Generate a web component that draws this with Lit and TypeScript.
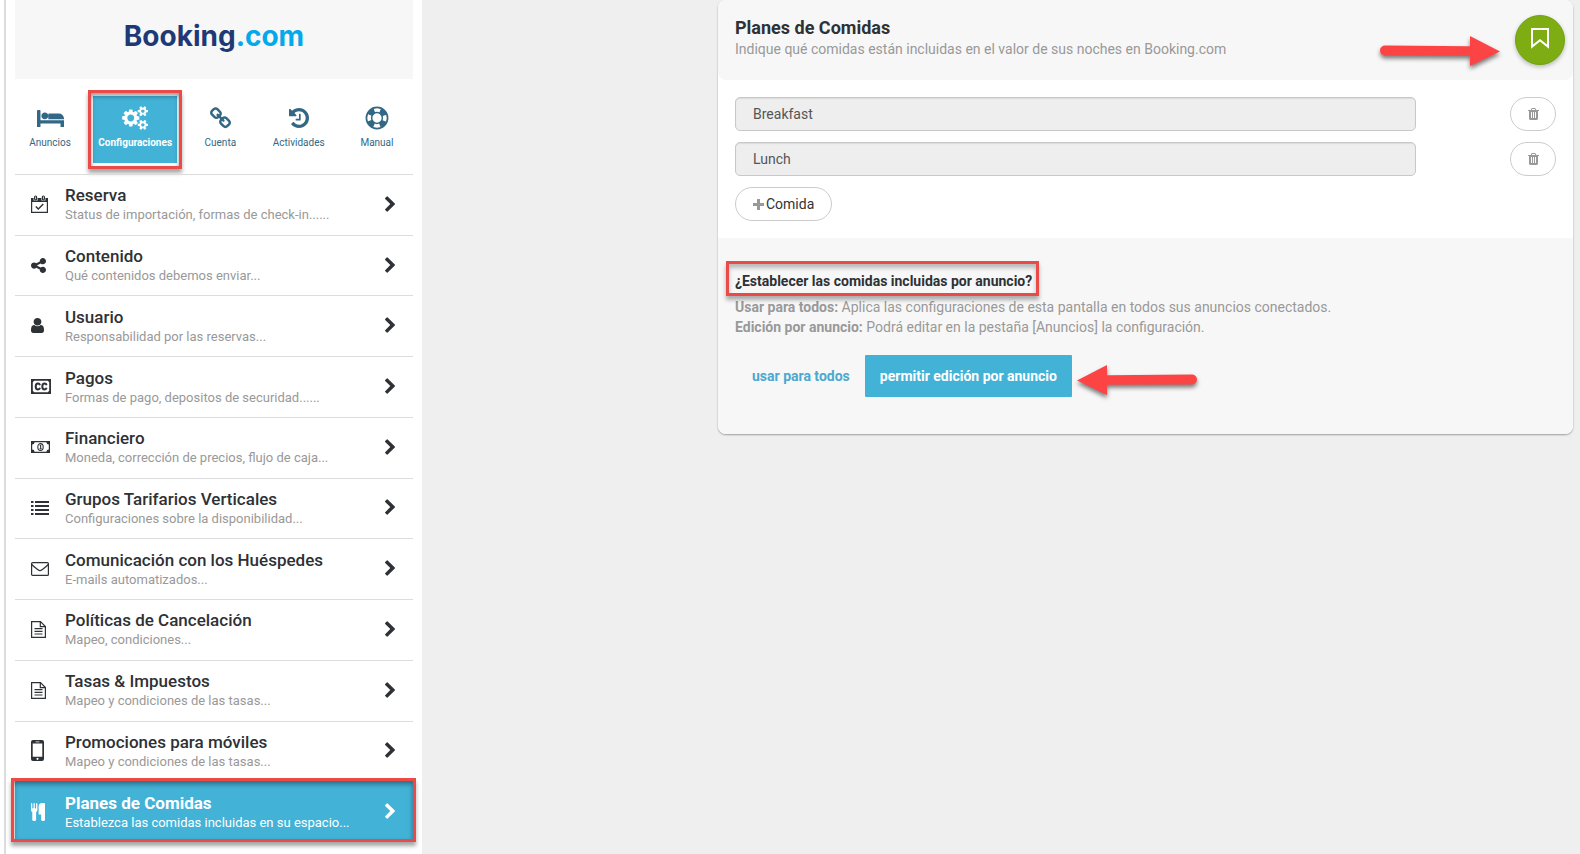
import { LitElement, html, css, svg, nothing } from "lit";
import { customElement, property, state } from "lit/decorators.js";
import { classMap } from "lit/directives/class-map.js";

type Glyph = { box: string; w: number; h: number; body: unknown };

const glyphs: Record<string, Glyph> = {
  bed: {
    box: "0 256 1984 1280", w: 27, h: 17,
    body: svg`<path d="M256 1024h1728v512h-256v-256h-1472v256h-256v-1216q0-26 19-45t45-19h128q26 0 45 19t19 45v704zm576-320q0-106-75-181t-181-75-181 75-75 181 75 181 181 75 181-75 75-181zm1152 256v-64q0-159-112.5-271.5t-271.5-112.5h-704q-26 0-45 19t-19 45v384h1152z"/>`,
  },
  cogs: {
    box: "0 0 1856 1792", w: 25, h: 24,
    body: svg`<path d="M832 896q0-106-75-181t-181-75-181 75-75 181 75 181 181 75 181-75 75-181zm768 512q0-52-38-90t-90-38-90 38-38 90q0 53 37.5 90.5t90.5 37.5 90.5-37.5 37.5-90.5zm0-1024q0-52-38-90t-90-38-90 38-38 90q0 53 37.5 90.5t90.5 37.5 90.5-37.5 37.5-90.5zm-384 421v185q0 10-7 19.5t-16 10.5l-155 24q-11 35-32 76 34 48 90 115 7 11 7 20 0 12-7 19-23 30-82.5 89.5t-78.5 59.5q-11 0-21-7l-115-90q-37 19-77 31-11 108-23 155-7 24-30 24h-186q-11 0-20-7.5t-10-17.5l-23-153q-34-10-75-31l-118 89q-7 7-20 7-11 0-21-8-144-133-144-160 0-9 7-19 10-14 41-53t47-61q-23-44-35-82l-152-24q-10-1-17-9.5t-7-19.5v-185q0-10 7-19.5t16-10.5l155-24q11-35 32-76-34-48-90-115-7-11-7-20 0-12 7-20 22-30 82-89t79-59q11 0 21 7l115 90q34-18 77-32 11-108 23-154 7-24 30-24h186q11 0 20 7.5t10 17.5l23 153q34 10 75 31l118-89q8-7 20-7 11 0 21 8 144 133 144 160 0 8-7 19-12 16-42 54t-45 60q23 48 34 82l152 23q10 2 17 10.5t7 19.5zm640 533v140q0 16-149 31-12 27-30 52 51 113 51 138 0 4-4 7-122 71-124 71-8 0-46-47t-52-68q-20 2-30 2t-30-2q-14 21-52 68t-46 47q-2 0-124-71-4-3-4-7 0-25 51-138-18-25-30-52-149-15-149-31v-140q0-16 149-31 13-29 30-52-51-113-51-138 0-4 4-7 4-2 35-20t59-34 30-16q8 0 46 46.5t52 67.5q20-2 30-2t30 2q51-71 92-112l6-2q4 0 124 70 4 3 4 7 0 25-51 138 17 23 30 52 149 15 149 31zm0-1024v140q0 16-149 31-12 27-30 52 51 113 51 138 0 4-4 7-122 71-124 71-8 0-46-47t-52-68q-20 2-30 2t-30-2q-14 21-52 68t-46 47q-2 0-124-71-4-3-4-7 0-25 51-138-18-25-30-52-149-15-149-31v-140q0-16 149-31 13-29 30-52-51-113-51-138 0-4 4-7 4-2 35-20t59-34 30-16q8 0 46 46.5t52 67.5q20-2 30-2t30 2q51-71 92-112l6-2q4 0 124 70 4 3 4 7 0 25-51 138 17 23 30 52 149 15 149 31z"/>`,
  },
  link: {
    box: "80 80 1632 1632", w: 21, h: 21,
    body: svg`<path d="M1520 1216q0-40-28-68l-208-208q-28-28-68-28-42 0-72 32 3 3 19 18.5t21.5 21.5 15 19 13 25.5 3.5 27.5q0 40-28 68t-68 28q-15 0-27.5-3.5t-25.5-13-19-15-21.5-21.5-18.5-19q-33 31-33 73 0 40 28 68l206 207q27 27 68 27 40 0 68-26l147-146q28-28 28-67zm-703-705q0-40-28-68l-206-207q-28-28-68-28-39 0-68 27l-147 146q-28 28-28 67 0 40 28 68l208 208q27 27 68 27 42 0 72-31-3-3-19-18.5t-21.5-21.5-15-19-13-25.5-3.5-27.5q0-40 28-68t68-28q15 0 27.5 3.5t25.5 13 19 15 21.5 21.5 18.5 19q33-31 33-73zm895 705q0 120-85 203l-147 146q-83 83-203 83-121 0-204-85l-206-207q-83-83-83-203 0-123 88-209l-88-88q-86 88-208 88-120 0-204-84l-208-208q-84-84-84-204t85-203l147-146q83-83 203-83 121 0 204 85l206 207q83 83 83 203 0 123-88 209l88 88q86-88 208-88 120 0 204 84l208 208q84 84 84 204z"/>`,
  },
  history: {
    box: "128 128 1536 1536", w: 20, h: 20,
    body: svg`<path d="M1664 896q0 156-61 298t-164 245-245 164-298 61q-172 0-327-72.5t-264-204.5q-7-10-6.5-22.5t8.5-20.5l137-138q10-9 25-9 16 2 23 12 73 95 179 147t225 52q104 0 198.5-40.5t163.5-109.5 109.5-163.5 40.5-198.5-40.5-198.5-109.5-163.5-163.5-109.5-198.5-40.5q-98 0-188 35.5t-160 101.5l137 138q31 30 14 69-17 40-59 40h-448q-26 0-45-19t-19-45v-448q0-42 40-59 39-17 69 14l130 129q107-101 244.5-156.5t284.5-55.5q156 0 298 61t245 164 164 245 61 298zm-640-288v448q0 14-9 23t-23 9h-320q-14 0-23-9t-9-23v-64q0-14 9-23t23-9h224v-352q0-14 9-23t23-9h64q14 0 23 9t9 23z"/>`,
  },
  ring: {
    box: "0 0 24 24", w: 24, h: 24,
    body: svg`<g fill="none" stroke="currentColor"><circle cx="12" cy="12" r="10.6" stroke-width="1.7"/><circle cx="12" cy="12" r="5.4" stroke-width="1.5"/><circle cx="12" cy="12" r="8" stroke-width="5.6" stroke-dasharray="6.6 5.966" stroke-dashoffset="-2.98"/></g>`,
  },
  calendar: {
    box: "0 0 17 18", w: 17, h: 18,
    body: svg`<path fill-rule="evenodd" d="M0 3h17v15H0zM1.2 7v9.8h14.6V7z"/><path fill="#fff" d="M2.6 1.6h4v4h-4zM10.4 1.6h4v4h-4z"/><path d="M3 2a1.6 1.6 0 0 1 3.2 0v1.8a1.6 1.6 0 0 1-3.2 0zM10.8 2a1.6 1.6 0 0 1 3.2 0v1.8a1.6 1.6 0 0 1-3.2 0z"/><path fill="#fff" d="M4.3 1.6h.7v2.6h-.7zM12.1 1.6h.7v2.6h-.7z"/><path fill="none" stroke="currentColor" stroke-width="1.4" d="M4.8 11.6l2.5 2.5 5-5"/>`,
  },
  share: {
    box: "128 128 1536 1536", w: 15, h: 15,
    body: svg`<path d="M1344 1024q133 0 226.5 93.5t93.5 226.5-93.5 226.5-226.5 93.5-226.5-93.5-93.5-226.5q0-12 2-34l-360-180q-92 86-218 86-133 0-226.5-93.5t-93.5-226.5 93.5-226.5 226.5-93.5q126 0 218 86l360-180q-2-22-2-34 0-133 93.5-226.5t226.5-93.5 226.5 93.5 93.5 226.5-93.5 226.5-226.5 93.5q-126 0-218-86l-360 180q2 22 2 34t-2 34l360 180q92-86 218-86z"/>`,
  },
  user: {
    box: "256 128 1280 1536", w: 13, h: 15,
    body: svg`<path d="M1536 1399q0 109-62.5 187t-150.5 78h-854q-88 0-150.5-78t-62.5-187q0-85 8.5-160.5t31.5-152 58.5-131 94-89 134.5-34.5q131 128 313 128t313-128q76 0 134.5 34.5t94 89 58.5 131 31.5 152 8.5 160.5zm-256-887q0 159-112.5 271.5t-271.5 112.5-271.5-112.5-112.5-271.5 112.5-271.5 271.5-112.5 271.5 112.5 112.5 271.5z"/>`,
  },
  cc: {
    box: "0 0 20 15", w: 20, h: 15,
    body: svg`<path fill-rule="evenodd" d="M0 0h20v15H0zM1.8 3.2v8.6l1.4 1.4h13.6l1.4-1.4V3.2l-1.4-1.4H3.2z"/><g fill="none" stroke="currentColor" stroke-width="2"><path d="M9 6.3C8.700 5 7.900 4.600 7 4.600 5.400 4.600 4.700 5.800 4.700 7.500S5.400 10.400 7 10.400C7.900 10.400 8.700 10 9 8.700"/><path d="M15.600 6.300C15.300 5 14.500 4.600 13.600 4.600 12 4.600 11.300 5.800 11.300 7.500S12 10.400 13.600 10.400C14.500 10.400 15.300 10 15.600 8.700"/></g>`,
  },
  money: {
    box: "0 0 19 12", w: 19, h: 12,
    body: svg`<path fill-rule="evenodd" d="M0 0h19v12H0zM3.600 1.200A2.500 2.500 0 0 1 1.200 3.500v5a2.500 2.500 0 0 1 2.400 2.300h11.800a2.500 2.500 0 0 1 2.400-2.300v-5a2.500 2.500 0 0 1-2.400-2.300z"/><ellipse cx="9.500" cy="6" rx="2.700" ry="3.400" fill="none" stroke="currentColor" stroke-width="1.100"/><path d="M8.500 4.500l1-.8h.7v3.700h.7v.8H8.400v-.8h.7V4.900z"/>`,
  },
  list: {
    box: "0 0 18 14", w: 18, h: 14,
    body: svg`<path d="M0 0h2.500v2H0zM4 0h14v2H4zM0 4h2.500v2H0zM4 4h14v2H4zM0 8h2.500v2H0zM4 8h14v2H4zM0 12h2.500v2H0zM4 12h14v2H4z"/>`,
  },
  mail: {
    box: "0 0 18 14", w: 18, h: 14,
    body: svg`<g fill="none" stroke="currentColor" stroke-width="1.200"><rect x=".6" y=".6" width="16.800" height="12.800" rx="1"/><path d="M.8 2.500c2 2.200 4 3.600 6.200 5.300q2 1.500 4 0c2.200-1.700 4.200-3.100 6.200-5.300"/></g>`,
  },
  file: {
    box: "0 0 15 17", w: 15, h: 17,
    body: svg`<g fill="none" stroke="currentColor" stroke-width="1.200"><path d="M.6.6h8.900l4.900 4.900v10.900H.6zM9.300.6v5h5"/><path d="M3.500 7.600h8M3.500 10.300h8M3.500 13h8"/></g>`,
  },
  phone: {
    box: "0 0 13 21", w: 13, h: 21,
    body: svg`<path fill-rule="evenodd" d="M2 0h9a2 2 0 0 1 2 2v17a2 2 0 0 1-2 2H2a2 2 0 0 1-2-2V2a2 2 0 0 1 2-2zM1.700 3.600v13.200h9.600V3.600zM4.600 1.500v.8h3.800v-.8zM6.500 17.700a1.100 1.100 0 1 0 .01 0z"/>`,
  },
  cutlery: {
    box: "192 0 1408 1792", w: 14, h: 18,
    body: svg`<path d="M832 64v640q0 61-35.500 111t-92.500 70v779q0 52-38 90t-90 38h-128q-52 0-90-38t-38-90v-779q-57-20-92.500-70t-35.500-111v-640q0-26 19-45t45-19 45 19 19 45v416q0 26 19 45t45 19 45-19 19-45v-416q0-26 19-45t45-19 45 19 19 45v416q0 26 19 45t45 19 45-19 19-45v-416q0-26 19-45t45-19 45 19 19 45zm768 0v1600q0 52-38 90t-90 38h-128q-52 0-90-38t-38-90v-512h-224q-13 0-22.500-9.500t-9.500-22.500v-800q0-132 94-226t226-94h256q26 0 45 19t19 45z"/>`,
  },
  chevron: {
    box: "346 102 1036 1556", w: 10, h: 15,
    body: svg`<path d="M1363 877l-742 742q-19 19-45 19t-45-19l-166-166q-19-19-19-45t19-45l531-531-531-531q-19-19-19-45t19-45l166-166q19-19 45-19t45 19l742 742q19 19 19 45t-19 45z"/>`,
  },
  trash: {
    box: "192 128 1408 1536", w: 11, h: 12,
    body: svg`<path d="M704 1376v-704q0-14-9-23t-23-9h-64q-14 0-23 9t-9 23v704q0 14 9 23t23 9h64q14 0 23-9t9-23zm256 0v-704q0-14-9-23t-23-9h-64q-14 0-23 9t-9 23v704q0 14 9 23t23 9h64q14 0 23-9t9-23zm256 0v-704q0-14-9-23t-23-9h-64q-14 0-23 9t-9 23v704q0 14 9 23t23 9h64q14 0 23-9t9-23zm-544-992h448l-48-117q-7-9-17-11h-317q-10 2-17 11zm928 32v64q0 14-9 23t-23 9h-96v948q0 83-47 143.500t-113 60.500h-832q-66 0-113-58.500t-47-141.500v-952h-96q-14 0-23-9t-9-23v-64q0-14 9-23t23-9h309l70-167q15-37 54-63t79-26h320q40 0 79 26t54 63l70 167h309q14 0 23 9t9 23z"/>`,
  },
  plus: {
    box: "0 0 11 11", w: 11, h: 11,
    body: svg`<path d="M4 0h3v4h4v3H7v4H4V7H0V4h4z"/>`,
  },
  bookmark: {
    box: "0 0 18 20", w: 18, h: 20,
    body: svg`<path fill="none" stroke="currentColor" stroke-width="2" d="M1 1h16v17.600l-8-6.400-8 6.400z"/>`,
  },
  arrow: {
    box: "0 0 120 32", w: 120, h: 32,
    body: svg`<path d="M5 9.500l85 .8V0l30 15.500L90 30V19.800L5 19.500a5 5 0 0 1 0-10z"/>`,
  },
};

@customElement("ui-icon")
export class UiIcon extends LitElement {
  static styles = css`
    :host { display: inline-flex; }
    .glyph { display: block; fill: currentColor; overflow: visible; }
  `;

  @property() name = "";

  render() {
    const g = glyphs[this.name];
    if (!g) return nothing;
    return html`<svg class="glyph" aria-hidden="true" width=${g.w} height=${g.h} viewBox=${g.box} preserveAspectRatio="none">${g.body}</svg>`;
  }
}

const tabs = [
  { icon: "bed", label: "Anuncios" },
  { icon: "cogs", label: "Configuraciones" },
  { icon: "link", label: "Cuenta" },
  { icon: "history", label: "Actividades" },
  { icon: "ring", label: "Manual" },
];

const sections = [
  { icon: "calendar", title: "Reserva", note: "Status de importación, formas de check-in......" },
  { icon: "share", title: "Contenido", note: "Qué contenidos debemos enviar..." },
  { icon: "user", title: "Usuario", note: "Responsabilidad por las reservas..." },
  { icon: "cc", title: "Pagos", note: "Formas de pago, depositos de securidad......" },
  { icon: "money", title: "Financiero", note: "Moneda, corrección de precios, flujo de caja..." },
  { icon: "list", title: "Grupos Tarifarios Verticales", note: "Configuraciones sobre la disponibilidad..." },
  { icon: "mail", title: "Comunicación con los Huéspedes", note: "E-mails automatizados..." },
  { icon: "file", title: "Políticas de Cancelación", note: "Mapeo, condiciones..." },
  { icon: "file", title: "Tasas & Impuestos", note: "Mapeo y condiciones de las tasas..." },
  { icon: "phone", title: "Promociones para móviles", note: "Mapeo y condiciones de las tasas..." },
  { icon: "cutlery", title: "Planes de Comidas", note: "Establezca las comidas incluidas en su espacio..." },
];

@customElement("settings-sidebar")
export class SettingsSidebar extends LitElement {
  static styles = css`
    :host {
      display: flex;
      flex-direction: column;
      box-sizing: border-box;
      min-height: 100vh;
      padding: 0 9px 12px;
      background: #fff;
      border-left: 2px solid #dcdcdc;
    }
    .brand {
      display: flex;
      justify-content: center;
      padding: 17px 0 24px;
      background: #f7f7f7;
      font: 700 28px/38px Inter, sans-serif;
      color: #1e3a76;
    }
    .brand-tld { color: #03a9eb; }
    .tabs {
      display: flex;
      justify-content: space-between;
      padding: 17px 1px 11px 0;
    }
    .tab {
      position: relative;
      display: flex;
      flex-direction: column;
      align-items: center;
      box-sizing: border-box;
      min-width: 70px;
      height: 67px;
      padding: 9px 5px 0;
      color: #326885;
      font-size: 10px;
      line-height: 14px;
      text-decoration: none;
    }
    .tab-icon {
      display: flex;
      align-items: center;
      height: 26px;
      margin-bottom: 5px;
    }
    .active { background: #43b2d7; color: #fff; font-weight: 700; }
    .marked::after {
      content: "";
      position: absolute;
      inset: -6px -5px;
      border: 3px solid #ea4a48;
      box-shadow: 0 4px 4px rgba(0, 0, 0, 0.35), inset 0 3px 5px rgba(0, 0, 0, 0.4);
      pointer-events: none;
    }
    .sections {
      flex: 1;
      display: grid;
      grid-auto-rows: 1fr;
      margin: 0;
      padding: 0;
      list-style: none;
    }
    .section {
      position: relative;
      display: flex;
      align-items: center;
      box-sizing: border-box;
      height: 100%;
      padding: 0 18px 1px 16px;
      border-top: 1px solid #dcdcdc;
      color: #2e3135;
      text-decoration: none;
    }
    .section.active { border-color: #43b2d7; color: #fff; }
    .section.marked::after { inset: -4px -3px 0 -4px; }
    .section-icon { width: 34px; flex: none; display: flex; }
    .section-text { flex: 1; min-width: 0; }
    .section-title { display: block; font-size: 17px; line-height: 22px; font-weight: 500; }
    .section-note { display: block; font-size: 13px; line-height: 18px; font-weight: 400; color: #999; }
    .active .section-title { font-weight: 700; }
    .active .section-note { color: #fff; }
  `;

  @state() private tab = "Configuraciones";
  @state() private section = "Planes de Comidas";

  private pickTab(e: Event, label: string) {
    e.preventDefault();
    this.tab = label;
  }

  private pickSection(e: Event, title: string) {
    e.preventDefault();
    this.section = title;
  }

  render() {
    return html`
      <div class="brand"><span>Booking</span><span class="brand-tld">.com</span></div>
      <nav class="tabs" aria-label="Booking.com">
        ${tabs.map((t) => html`
          <a href="#" class=${classMap({ tab: true, active: t.label === this.tab, marked: t.label === this.tab })}
            @click=${(e: Event) => this.pickTab(e, t.label)}>
            <span class="tab-icon"><ui-icon name=${t.icon}></ui-icon></span>
            <span>${t.label}</span>
          </a>`)}
      </nav>
      <ul class="sections">
        ${sections.map((s) => html`
          <li>
            <a href="#" class=${classMap({ section: true, active: s.title === this.section, marked: s.title === this.section })}
              @click=${(e: Event) => this.pickSection(e, s.title)}>
              <span class="section-icon"><ui-icon name=${s.icon}></ui-icon></span>
              <span class="section-text">
                <span class="section-title">${s.title}</span>
                <span class="section-note">${s.note}</span>
              </span>
              <ui-icon name="chevron"></ui-icon>
            </a>
          </li>`)}
      </ul>
    `;
  }
}

@customElement("meal-plans")
export class MealPlans extends LitElement {
  static styles = css`
    :host {
      display: block;
      background: #fff;
      border-radius: 8px;
      box-shadow: 0 1px 2px rgba(0, 0, 0, 0.35);
    }
    button { font-family: inherit; cursor: pointer; }
    .head {
      position: relative;
      display: flex;
      justify-content: space-between;
      align-items: flex-start;
      padding: 15px 8px 15px 17px;
      background: #f7f7f7;
      border-radius: 8px;
    }
    .titles { padding-top: 1px; }
    .title { margin: 0; font-size: 18px; line-height: 24px; font-weight: 700; color: #2e3135; }
    .lead { margin: 0; font-size: 14px; line-height: 18px; color: #999; }
    .save {
      display: flex;
      justify-content: center;
      align-items: center;
      width: 50px;
      height: 50px;
      padding: 0 0 4px;
      border: 1px solid #72a30f;
      border-radius: 50%;
      background: #7eac13;
      color: #fff;
      box-shadow: 0 2px 4px rgba(0, 0, 0, 0.25);
    }
    .pointer {
      position: absolute;
      color: #fd4444;
      filter: drop-shadow(0 3px 2px rgba(0, 0, 0, 0.5));
      pointer-events: none;
    }
    .to-save { top: 36px; right: 73px; }
    .to-mode { top: 10px; left: 100%; margin-left: 5px; transform: scaleX(-1); }
    .meals { display: grid; gap: 11px; padding: 17px; justify-items: start; }
    .meal {
      display: grid;
      grid-template-columns: 83fr 17fr;
      align-items: center;
      justify-self: stretch;
    }
    .meal-name {
      box-sizing: border-box;
      width: 100%;
      height: 34px;
      padding: 0 17px;
      border: 1px solid #c6c8ca;
      border-radius: 5px;
      background: #eee;
      box-shadow: inset 0 1px 1px rgba(0, 0, 0, 0.08);
      color: #555;
      font: 400 14px/20px Roboto, sans-serif;
    }
    .pill {
      display: flex;
      justify-content: center;
      align-items: center;
      gap: 2px;
      box-sizing: border-box;
      height: 34px;
      padding: 0 17px;
      border: 1px solid #ccc;
      border-radius: 17px;
      background: #fff;
      color: #333;
      font-size: 14px;
    }
    .pill ui-icon { color: #999; }
    .remove { justify-self: end; width: 46px; padding: 0; }
    .foot {
      padding: 33px 17px 37px;
      background: #f7f7f7;
      border-radius: 0 0 8px 8px;
      font-size: 14px;
      line-height: 20px;
      color: #999;
    }
    .question {
      position: relative;
      width: fit-content;
      margin: 0 0 6px;
      font-size: 14px;
      line-height: 20px;
      font-weight: 700;
      color: #2e3135;
    }
    .question::after {
      content: "";
      position: absolute;
      inset: -10px -7px -5px -9px;
      border: 3px solid #ea4a48;
      box-shadow: 0 4px 4px rgba(0, 0, 0, 0.3), inset 0 4px 4px rgba(0, 0, 0, 0.25);
      pointer-events: none;
    }
    .option { margin: 0; }
    .modes { display: flex; padding: 18px 0 0 2px; }
    .mode {
      position: relative;
      height: 42px;
      padding: 0 15px;
      border: 0;
      border-radius: 1px;
      background: none;
      color: #4ba9d0;
      font-size: 14px;
      font-weight: 700;
    }
    .chosen { background: #43b2d7; color: #fff; }
  `;

  @state() private meals = ["Breakfast", "Lunch"];

  private remove(index: number) {
    this.meals = this.meals.filter((_, i) => i !== index);
  }

  private add() {
    this.meals = [...this.meals, ""];
  }

  render() {
    return html`
      <header class="head">
        <div class="titles">
          <h1 class="title">Planes de Comidas</h1>
          <p class="lead">Indique qué comidas están incluidas en el valor de sus noches en Booking.com</p>
        </div>
        <button class="save" aria-label="Guardar"><ui-icon name="bookmark"></ui-icon></button>
        <ui-icon class="pointer to-save" name="arrow"></ui-icon>
      </header>
      <div class="meals">
        ${this.meals.map((m, i) => html`
          <div class="meal">
            <input class="meal-name" type="text" aria-label="Comida" readonly .value=${m} />
            <button class="pill remove" aria-label="Eliminar" @click=${() => this.remove(i)}>
              <ui-icon name="trash"></ui-icon>
            </button>
          </div>`)}
        <button class="pill" @click=${this.add}><ui-icon name="plus"></ui-icon>Comida</button>
      </div>
      <section class="foot">
        <h2 class="question">¿Establecer las comidas incluidas por anuncio?</h2>
        <p class="option"><b>Usar para todos:</b> Aplica las configuraciones de esta pantalla en todos sus anuncios conectados.</p>
        <p class="option"><b>Edición por anuncio:</b> Podrá editar en la pestaña [Anuncios] la configuración.</p>
        <div class="modes">
          <button class="mode">usar para todos</button>
          <button class="mode chosen">permitir edición por anuncio<ui-icon class="pointer to-mode" name="arrow"></ui-icon></button>
        </div>
      </section>
    `;
  }
}

@customElement("app-root")
export class AppRoot extends LitElement {
  static styles = css`
    :host {
      display: grid;
      grid-template-columns: 418px 1fr;
      box-sizing: border-box;
      min-height: 100vh;
      padding-left: 4px;
      background: linear-gradient(to right, #fff 4px, #efefef 4px);
      font-family: Roboto, sans-serif;
    }
    .content {
      display: grid;
      grid-template-columns: 296fr 855fr;
      align-items: start;
      padding-right: 7px;
    }
    .panel { grid-column: 2; }
  `;

  render() {
    return html`
      <settings-sidebar></settings-sidebar>
      <main class="content"><meal-plans class="panel"></meal-plans></main>
    `;
  }
}
